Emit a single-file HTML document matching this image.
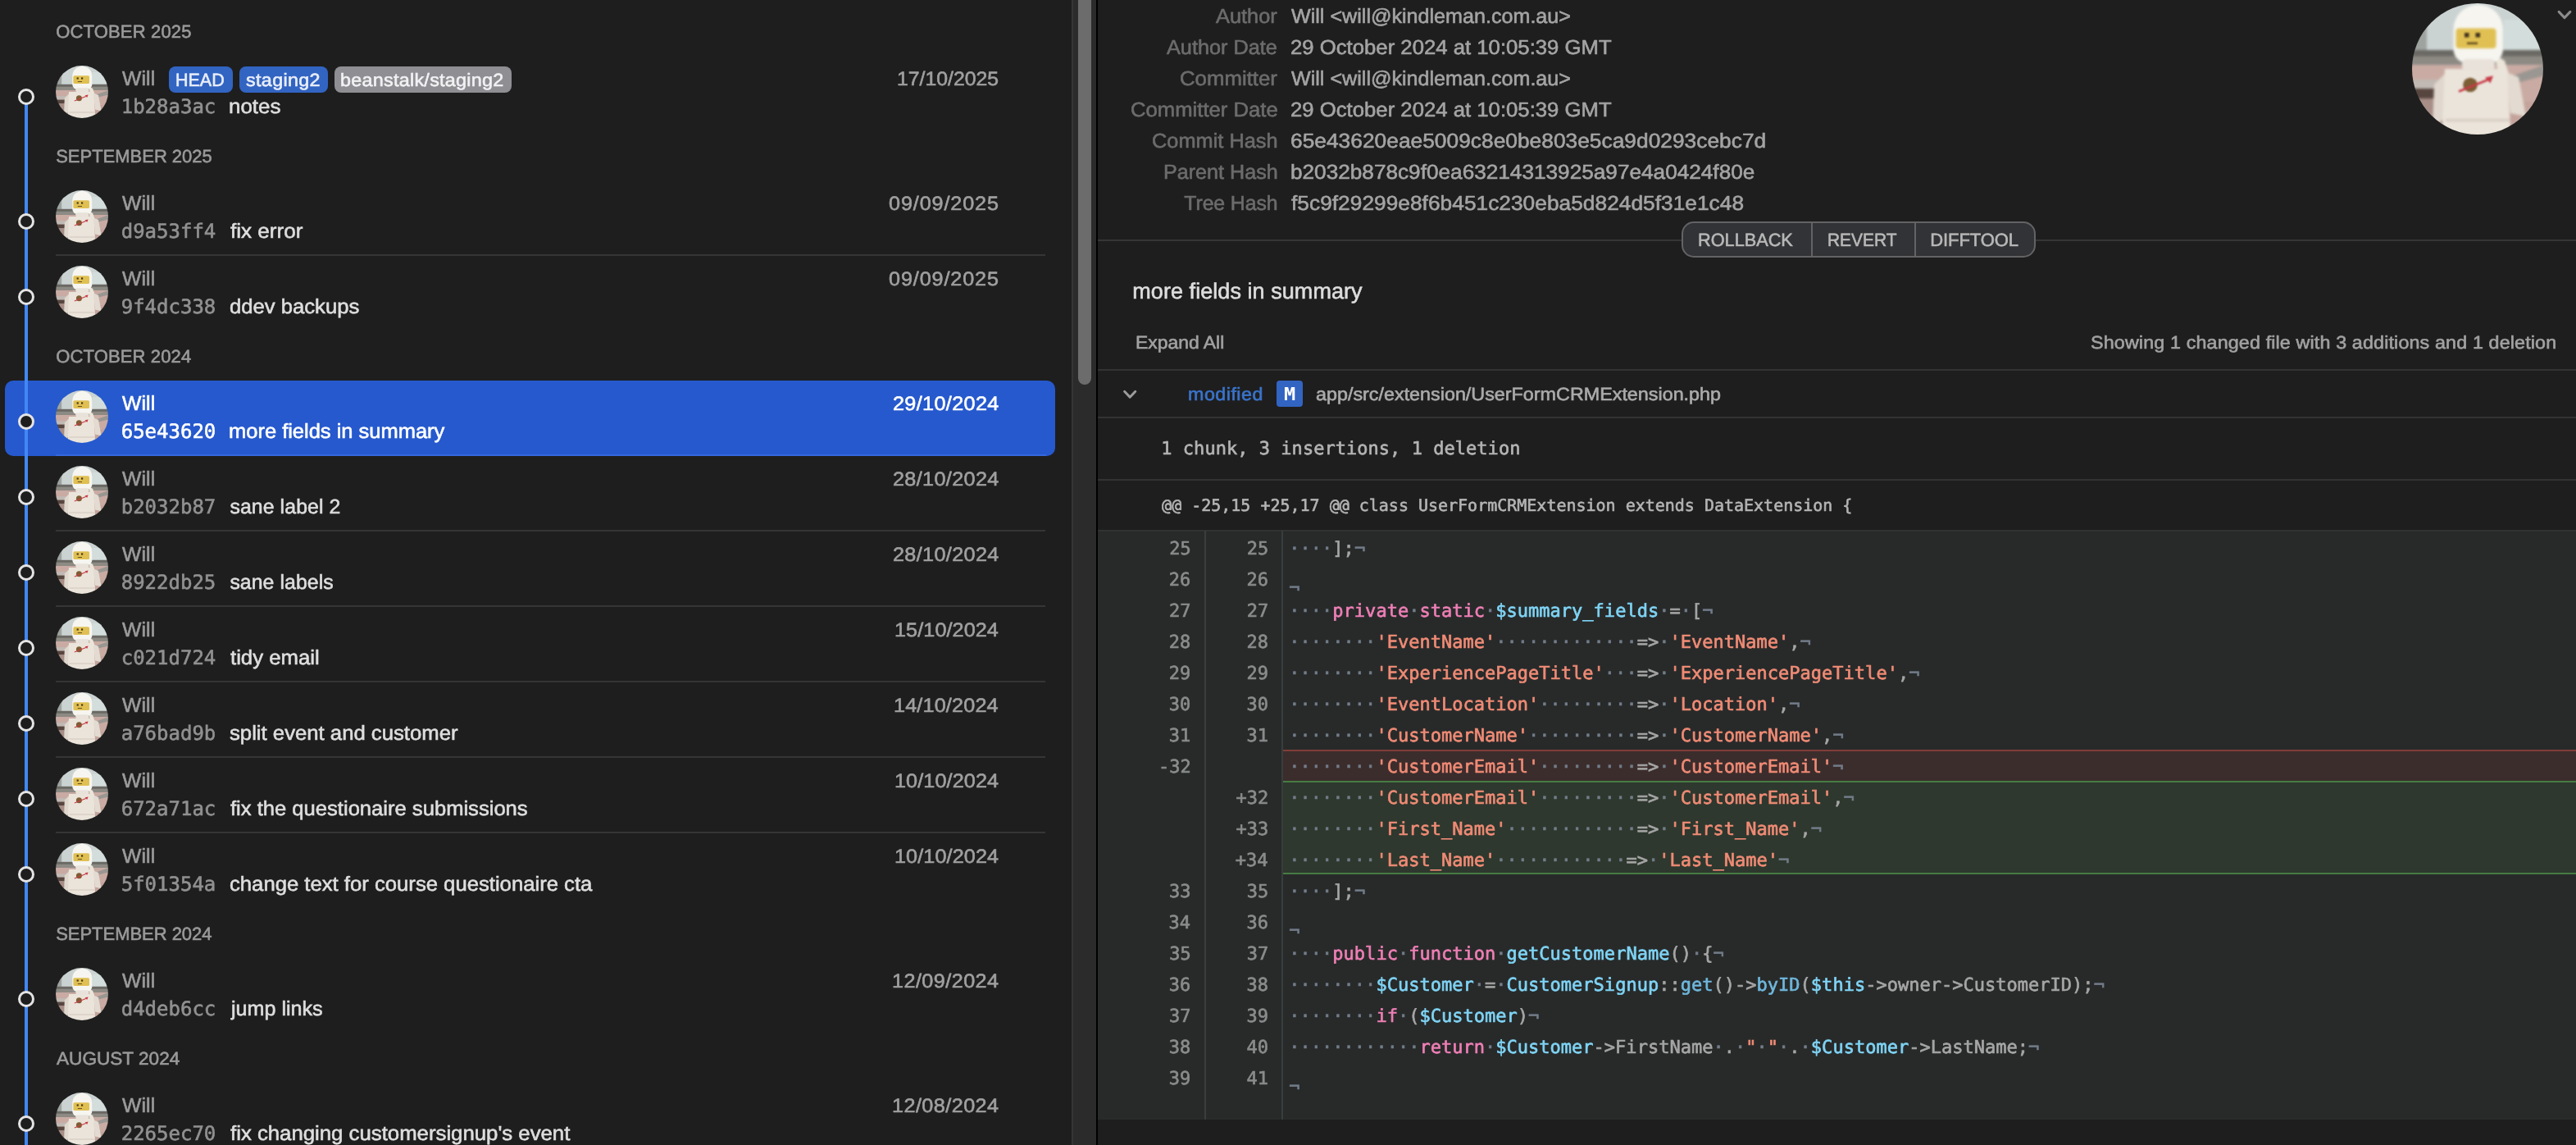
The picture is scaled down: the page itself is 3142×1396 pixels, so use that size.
<!DOCTYPE html>
<html lang="en">
<head>
<meta charset="utf-8">
<title>Commit history</title>
<style>
*{box-sizing:border-box;margin:0;padding:0}
html,body{width:3142px;height:1396px;overflow:hidden;background:#1e1e1e}
body{position:relative;font-family:"Liberation Sans",sans-serif}
section{position:absolute;left:0;top:0;width:3142px;height:1396px;transform:translateZ(0)}
.b,.t,svg.a{position:absolute}
.t,.ln{white-space:pre;line-height:1;display:block;transform-origin:0 0;text-rendering:geometricPrecision}
.m{font-family:"DejaVu Sans Mono","Liberation Mono",monospace}
.ln{position:absolute;font-family:"DejaVu Sans Mono","Liberation Mono",monospace;font-size:22px;letter-spacing:0.015px;-webkit-text-stroke:0.64px;color:#a6a6a6}
.k{color:#ee7fb5}.v{color:#7fd4f5}.s{color:#f08b75}.f{color:#6fb7dc}.d{color:#727c89}
.e{position:relative;top:10px}
</style>
</head>
<body>
<section class="commit-list">
<div class="b sel" style="left:6px;top:464px;width:1281px;height:92px;background:#2659cd;border-radius:10px"></div>
<div class="b rail" style="left:30px;top:118px;width:4px;height:1278px;background:#4287f5;"></div>
<span class="t" style="left:68.20px;top:28px;font-size:22px;color:#9a9a9a;letter-spacing:0.165px;-webkit-text-stroke:0.6px;">OCTOBER 2025</span>
<span class="t" style="left:68.20px;top:180px;font-size:22px;color:#9a9a9a;letter-spacing:-0.015px;-webkit-text-stroke:0.6px;">SEPTEMBER 2025</span>
<span class="t" style="left:68.20px;top:424px;font-size:22px;color:#9a9a9a;letter-spacing:0.143px;-webkit-text-stroke:0.6px;">OCTOBER 2024</span>
<span class="t" style="left:68.20px;top:1128px;font-size:22px;color:#9a9a9a;letter-spacing:-0.034px;-webkit-text-stroke:0.6px;">SEPTEMBER 2024</span>
<span class="t" style="left:69.21px;top:1280px;font-size:22px;color:#9a9a9a;transform:scaleX(1.0271);-webkit-text-stroke:0.6px;">AUGUST 2024</span>
<svg class="a" style="left:68px;top:80px;border-radius:50%" width="64" height="64" viewBox="0 0 160 160" role="img" aria-label="Will avatar"><g style="filter:blur(1.8px)"><rect x="-10" y="-10" width="180" height="72" fill="#cbd3d2"/><rect x="-10" y="-10" width="28" height="72" fill="#9ea3a0"/><rect x="112" y="20" width="60" height="36" fill="#d3dddb"/><rect x="-10" y="57" width="180" height="8" fill="#6b6964"/><rect x="-10" y="64.5" width="180" height="11" fill="#8d8a84"/><rect x="-10" y="75" width="180" height="95" fill="#c9aba3"/><rect x="-10" y="93" width="50" height="11" fill="#c0b9b4"/><rect x="-10" y="104" width="48" height="12" fill="#56463f"/><rect x="-10" y="116" width="48" height="54" fill="#a78e87"/><polygon points="170,72 170,86 128,97 124,88" fill="#9a9691"/><rect x="120" y="120" width="50" height="50" fill="#c3a39b"/><polygon points="27,99 42,84 45,136 25,152" fill="#e0d8ce"/><polygon points="115,84 130,90 139,138 120,134" fill="#e3dbd1"/><polygon points="100,62 113,70 118,86 105,84" fill="#ebe5d9"/><polygon points="40,80 116,80 121,170 36,170" fill="#ebe4db"/><rect x="41" y="141" width="78" height="3" fill="#d6ccc1"/><path d="M50.5 32 A30 30 0 0 1 111 32 V56 A17 17 0 0 1 94 73 H67.5 A17 17 0 0 1 50.5 56 Z" fill="#f6f5f0"/><rect x="61" y="68" width="40" height="14" rx="5" fill="#e8e2da"/><rect x="53.5" y="30.5" width="49" height="24.5" rx="4" fill="#e0c052"/></g><g style="filter:blur(1px)"><rect x="64" y="36" width="5.5" height="5.5" fill="#46371f"/><rect x="77.5" y="36" width="5.5" height="5.5" fill="#46371f"/><rect x="67" y="47.5" width="13" height="2.6" fill="#6b5322"/><circle cx="71" cy="99.5" r="8.8" fill="#7c5d34"/><path d="M57 107.5 L92 93.5" stroke="#c73a45" stroke-width="2.6" fill="none"/><polygon points="89,90.5 99,88.5 95.5,97.5" fill="#c73a45"/></g></svg>
<div class="b node" style="left:22px;top:108px;width:20px;height:20px;border-radius:50%;border:3px solid #e4e4e4;background:#1e1e1e"></div>
<span class="t" style="left:149.00px;top:85px;font-size:24.8px;color:#9b9b9b;letter-spacing:0.089px;-webkit-text-stroke:0.6px;">Will</span>
<span class="t m" style="left:147.7px;top:118px;font-size:24px;color:#919191;-webkit-text-stroke:0.6px">1b28a3ac</span>
<span class="t" style="left:279.32px;top:119px;font-size:24.8px;color:#dedede;transform:scaleX(1.0453);-webkit-text-stroke:0.6px;">notes</span>
<span class="t" style="left:1094.29px;top:85px;font-size:23.8px;color:#a0a0a0;transform:scaleX(1.0423);-webkit-text-stroke:0.6px;">17/10/2025</span>
<svg class="a" style="left:68px;top:232px;border-radius:50%" width="64" height="64" viewBox="0 0 160 160" role="img" aria-label="Will avatar"><g style="filter:blur(1.8px)"><rect x="-10" y="-10" width="180" height="72" fill="#cbd3d2"/><rect x="-10" y="-10" width="28" height="72" fill="#9ea3a0"/><rect x="112" y="20" width="60" height="36" fill="#d3dddb"/><rect x="-10" y="57" width="180" height="8" fill="#6b6964"/><rect x="-10" y="64.5" width="180" height="11" fill="#8d8a84"/><rect x="-10" y="75" width="180" height="95" fill="#c9aba3"/><rect x="-10" y="93" width="50" height="11" fill="#c0b9b4"/><rect x="-10" y="104" width="48" height="12" fill="#56463f"/><rect x="-10" y="116" width="48" height="54" fill="#a78e87"/><polygon points="170,72 170,86 128,97 124,88" fill="#9a9691"/><rect x="120" y="120" width="50" height="50" fill="#c3a39b"/><polygon points="27,99 42,84 45,136 25,152" fill="#e0d8ce"/><polygon points="115,84 130,90 139,138 120,134" fill="#e3dbd1"/><polygon points="100,62 113,70 118,86 105,84" fill="#ebe5d9"/><polygon points="40,80 116,80 121,170 36,170" fill="#ebe4db"/><rect x="41" y="141" width="78" height="3" fill="#d6ccc1"/><path d="M50.5 32 A30 30 0 0 1 111 32 V56 A17 17 0 0 1 94 73 H67.5 A17 17 0 0 1 50.5 56 Z" fill="#f6f5f0"/><rect x="61" y="68" width="40" height="14" rx="5" fill="#e8e2da"/><rect x="53.5" y="30.5" width="49" height="24.5" rx="4" fill="#e0c052"/></g><g style="filter:blur(1px)"><rect x="64" y="36" width="5.5" height="5.5" fill="#46371f"/><rect x="77.5" y="36" width="5.5" height="5.5" fill="#46371f"/><rect x="67" y="47.5" width="13" height="2.6" fill="#6b5322"/><circle cx="71" cy="99.5" r="8.8" fill="#7c5d34"/><path d="M57 107.5 L92 93.5" stroke="#c73a45" stroke-width="2.6" fill="none"/><polygon points="89,90.5 99,88.5 95.5,97.5" fill="#c73a45"/></g></svg>
<div class="b node" style="left:22px;top:260px;width:20px;height:20px;border-radius:50%;border:3px solid #e4e4e4;background:#1e1e1e"></div>
<span class="t" style="left:149.00px;top:237px;font-size:24.8px;color:#9b9b9b;letter-spacing:0.089px;-webkit-text-stroke:0.6px;">Will</span>
<span class="t m" style="left:147.7px;top:270px;font-size:24px;color:#919191;-webkit-text-stroke:0.6px">d9a53ff4</span>
<span class="t" style="left:280.75px;top:271px;font-size:24.8px;color:#dedede;transform:scaleX(1.0517);-webkit-text-stroke:0.6px;">fix error</span>
<span class="t" style="left:1084.49px;top:237px;font-size:23.8px;color:#a0a0a0;letter-spacing:0.808px;transform:scaleX(1.0600);-webkit-text-stroke:0.6px;">09/09/2025</span>
<div class="b sep" style="left:68px;top:310px;width:1207px;height:2px;background:#353535;"></div>
<svg class="a" style="left:68px;top:324px;border-radius:50%" width="64" height="64" viewBox="0 0 160 160" role="img" aria-label="Will avatar"><g style="filter:blur(1.8px)"><rect x="-10" y="-10" width="180" height="72" fill="#cbd3d2"/><rect x="-10" y="-10" width="28" height="72" fill="#9ea3a0"/><rect x="112" y="20" width="60" height="36" fill="#d3dddb"/><rect x="-10" y="57" width="180" height="8" fill="#6b6964"/><rect x="-10" y="64.5" width="180" height="11" fill="#8d8a84"/><rect x="-10" y="75" width="180" height="95" fill="#c9aba3"/><rect x="-10" y="93" width="50" height="11" fill="#c0b9b4"/><rect x="-10" y="104" width="48" height="12" fill="#56463f"/><rect x="-10" y="116" width="48" height="54" fill="#a78e87"/><polygon points="170,72 170,86 128,97 124,88" fill="#9a9691"/><rect x="120" y="120" width="50" height="50" fill="#c3a39b"/><polygon points="27,99 42,84 45,136 25,152" fill="#e0d8ce"/><polygon points="115,84 130,90 139,138 120,134" fill="#e3dbd1"/><polygon points="100,62 113,70 118,86 105,84" fill="#ebe5d9"/><polygon points="40,80 116,80 121,170 36,170" fill="#ebe4db"/><rect x="41" y="141" width="78" height="3" fill="#d6ccc1"/><path d="M50.5 32 A30 30 0 0 1 111 32 V56 A17 17 0 0 1 94 73 H67.5 A17 17 0 0 1 50.5 56 Z" fill="#f6f5f0"/><rect x="61" y="68" width="40" height="14" rx="5" fill="#e8e2da"/><rect x="53.5" y="30.5" width="49" height="24.5" rx="4" fill="#e0c052"/></g><g style="filter:blur(1px)"><rect x="64" y="36" width="5.5" height="5.5" fill="#46371f"/><rect x="77.5" y="36" width="5.5" height="5.5" fill="#46371f"/><rect x="67" y="47.5" width="13" height="2.6" fill="#6b5322"/><circle cx="71" cy="99.5" r="8.8" fill="#7c5d34"/><path d="M57 107.5 L92 93.5" stroke="#c73a45" stroke-width="2.6" fill="none"/><polygon points="89,90.5 99,88.5 95.5,97.5" fill="#c73a45"/></g></svg>
<div class="b node" style="left:22px;top:352px;width:20px;height:20px;border-radius:50%;border:3px solid #e4e4e4;background:#1e1e1e"></div>
<span class="t" style="left:149.00px;top:329px;font-size:24.8px;color:#9b9b9b;letter-spacing:0.089px;-webkit-text-stroke:0.6px;">Will</span>
<span class="t m" style="left:147.7px;top:362px;font-size:24px;color:#919191;-webkit-text-stroke:0.6px">9f4dc338</span>
<span class="t" style="left:279.98px;top:363px;font-size:24.8px;color:#dedede;transform:scaleX(1.0346);-webkit-text-stroke:0.6px;">ddev backups</span>
<span class="t" style="left:1084.49px;top:329px;font-size:23.8px;color:#a0a0a0;letter-spacing:0.808px;transform:scaleX(1.0600);-webkit-text-stroke:0.6px;">09/09/2025</span>
<svg class="a" style="left:68px;top:476px;border-radius:50%" width="64" height="64" viewBox="0 0 160 160" role="img" aria-label="Will avatar"><g style="filter:blur(1.8px)"><rect x="-10" y="-10" width="180" height="72" fill="#cbd3d2"/><rect x="-10" y="-10" width="28" height="72" fill="#9ea3a0"/><rect x="112" y="20" width="60" height="36" fill="#d3dddb"/><rect x="-10" y="57" width="180" height="8" fill="#6b6964"/><rect x="-10" y="64.5" width="180" height="11" fill="#8d8a84"/><rect x="-10" y="75" width="180" height="95" fill="#c9aba3"/><rect x="-10" y="93" width="50" height="11" fill="#c0b9b4"/><rect x="-10" y="104" width="48" height="12" fill="#56463f"/><rect x="-10" y="116" width="48" height="54" fill="#a78e87"/><polygon points="170,72 170,86 128,97 124,88" fill="#9a9691"/><rect x="120" y="120" width="50" height="50" fill="#c3a39b"/><polygon points="27,99 42,84 45,136 25,152" fill="#e0d8ce"/><polygon points="115,84 130,90 139,138 120,134" fill="#e3dbd1"/><polygon points="100,62 113,70 118,86 105,84" fill="#ebe5d9"/><polygon points="40,80 116,80 121,170 36,170" fill="#ebe4db"/><rect x="41" y="141" width="78" height="3" fill="#d6ccc1"/><path d="M50.5 32 A30 30 0 0 1 111 32 V56 A17 17 0 0 1 94 73 H67.5 A17 17 0 0 1 50.5 56 Z" fill="#f6f5f0"/><rect x="61" y="68" width="40" height="14" rx="5" fill="#e8e2da"/><rect x="53.5" y="30.5" width="49" height="24.5" rx="4" fill="#e0c052"/></g><g style="filter:blur(1px)"><rect x="64" y="36" width="5.5" height="5.5" fill="#46371f"/><rect x="77.5" y="36" width="5.5" height="5.5" fill="#46371f"/><rect x="67" y="47.5" width="13" height="2.6" fill="#6b5322"/><circle cx="71" cy="99.5" r="8.8" fill="#7c5d34"/><path d="M57 107.5 L92 93.5" stroke="#c73a45" stroke-width="2.6" fill="none"/><polygon points="89,90.5 99,88.5 95.5,97.5" fill="#c73a45"/></g></svg>
<div class="b node" style="left:22px;top:504px;width:20px;height:20px;border-radius:50%;border:3px solid #e4e4e4;background:#1e1e1e"></div>
<span class="t" style="left:149.00px;top:481px;font-size:24.8px;color:#ffffff;letter-spacing:0.089px;-webkit-text-stroke:0.6px;">Will</span>
<span class="t m" style="left:147.7px;top:514px;font-size:24px;color:#ffffff;-webkit-text-stroke:0.6px">65e43620</span>
<span class="t" style="left:279.34px;top:515px;font-size:24.8px;color:#ffffff;transform:scaleX(1.0275);-webkit-text-stroke:0.6px;">more fields in summary</span>
<span class="t" style="left:1088.73px;top:481px;font-size:23.8px;color:#ffffff;letter-spacing:0.323px;transform:scaleX(1.0600);-webkit-text-stroke:0.6px;">29/10/2024</span>
<div class="b sep" style="left:68px;top:554px;width:1208px;height:2px;background:#3468dc;"></div>
<svg class="a" style="left:68px;top:568px;border-radius:50%" width="64" height="64" viewBox="0 0 160 160" role="img" aria-label="Will avatar"><g style="filter:blur(1.8px)"><rect x="-10" y="-10" width="180" height="72" fill="#cbd3d2"/><rect x="-10" y="-10" width="28" height="72" fill="#9ea3a0"/><rect x="112" y="20" width="60" height="36" fill="#d3dddb"/><rect x="-10" y="57" width="180" height="8" fill="#6b6964"/><rect x="-10" y="64.5" width="180" height="11" fill="#8d8a84"/><rect x="-10" y="75" width="180" height="95" fill="#c9aba3"/><rect x="-10" y="93" width="50" height="11" fill="#c0b9b4"/><rect x="-10" y="104" width="48" height="12" fill="#56463f"/><rect x="-10" y="116" width="48" height="54" fill="#a78e87"/><polygon points="170,72 170,86 128,97 124,88" fill="#9a9691"/><rect x="120" y="120" width="50" height="50" fill="#c3a39b"/><polygon points="27,99 42,84 45,136 25,152" fill="#e0d8ce"/><polygon points="115,84 130,90 139,138 120,134" fill="#e3dbd1"/><polygon points="100,62 113,70 118,86 105,84" fill="#ebe5d9"/><polygon points="40,80 116,80 121,170 36,170" fill="#ebe4db"/><rect x="41" y="141" width="78" height="3" fill="#d6ccc1"/><path d="M50.5 32 A30 30 0 0 1 111 32 V56 A17 17 0 0 1 94 73 H67.5 A17 17 0 0 1 50.5 56 Z" fill="#f6f5f0"/><rect x="61" y="68" width="40" height="14" rx="5" fill="#e8e2da"/><rect x="53.5" y="30.5" width="49" height="24.5" rx="4" fill="#e0c052"/></g><g style="filter:blur(1px)"><rect x="64" y="36" width="5.5" height="5.5" fill="#46371f"/><rect x="77.5" y="36" width="5.5" height="5.5" fill="#46371f"/><rect x="67" y="47.5" width="13" height="2.6" fill="#6b5322"/><circle cx="71" cy="99.5" r="8.8" fill="#7c5d34"/><path d="M57 107.5 L92 93.5" stroke="#c73a45" stroke-width="2.6" fill="none"/><polygon points="89,90.5 99,88.5 95.5,97.5" fill="#c73a45"/></g></svg>
<div class="b node" style="left:22px;top:596px;width:20px;height:20px;border-radius:50%;border:3px solid #e4e4e4;background:#1e1e1e"></div>
<span class="t" style="left:149.00px;top:573px;font-size:24.8px;color:#9b9b9b;letter-spacing:0.089px;-webkit-text-stroke:0.6px;">Will</span>
<span class="t m" style="left:147.7px;top:606px;font-size:24px;color:#919191;-webkit-text-stroke:0.6px">b2032b87</span>
<span class="t" style="left:280.38px;top:607px;font-size:24.8px;color:#dedede;letter-spacing:0.117px;-webkit-text-stroke:0.6px;">sane label 2</span>
<span class="t" style="left:1088.73px;top:573px;font-size:23.8px;color:#a0a0a0;letter-spacing:0.323px;transform:scaleX(1.0600);-webkit-text-stroke:0.6px;">28/10/2024</span>
<div class="b sep" style="left:68px;top:646px;width:1207px;height:2px;background:#353535;"></div>
<svg class="a" style="left:68px;top:660px;border-radius:50%" width="64" height="64" viewBox="0 0 160 160" role="img" aria-label="Will avatar"><g style="filter:blur(1.8px)"><rect x="-10" y="-10" width="180" height="72" fill="#cbd3d2"/><rect x="-10" y="-10" width="28" height="72" fill="#9ea3a0"/><rect x="112" y="20" width="60" height="36" fill="#d3dddb"/><rect x="-10" y="57" width="180" height="8" fill="#6b6964"/><rect x="-10" y="64.5" width="180" height="11" fill="#8d8a84"/><rect x="-10" y="75" width="180" height="95" fill="#c9aba3"/><rect x="-10" y="93" width="50" height="11" fill="#c0b9b4"/><rect x="-10" y="104" width="48" height="12" fill="#56463f"/><rect x="-10" y="116" width="48" height="54" fill="#a78e87"/><polygon points="170,72 170,86 128,97 124,88" fill="#9a9691"/><rect x="120" y="120" width="50" height="50" fill="#c3a39b"/><polygon points="27,99 42,84 45,136 25,152" fill="#e0d8ce"/><polygon points="115,84 130,90 139,138 120,134" fill="#e3dbd1"/><polygon points="100,62 113,70 118,86 105,84" fill="#ebe5d9"/><polygon points="40,80 116,80 121,170 36,170" fill="#ebe4db"/><rect x="41" y="141" width="78" height="3" fill="#d6ccc1"/><path d="M50.5 32 A30 30 0 0 1 111 32 V56 A17 17 0 0 1 94 73 H67.5 A17 17 0 0 1 50.5 56 Z" fill="#f6f5f0"/><rect x="61" y="68" width="40" height="14" rx="5" fill="#e8e2da"/><rect x="53.5" y="30.5" width="49" height="24.5" rx="4" fill="#e0c052"/></g><g style="filter:blur(1px)"><rect x="64" y="36" width="5.5" height="5.5" fill="#46371f"/><rect x="77.5" y="36" width="5.5" height="5.5" fill="#46371f"/><rect x="67" y="47.5" width="13" height="2.6" fill="#6b5322"/><circle cx="71" cy="99.5" r="8.8" fill="#7c5d34"/><path d="M57 107.5 L92 93.5" stroke="#c73a45" stroke-width="2.6" fill="none"/><polygon points="89,90.5 99,88.5 95.5,97.5" fill="#c73a45"/></g></svg>
<div class="b node" style="left:22px;top:688px;width:20px;height:20px;border-radius:50%;border:3px solid #e4e4e4;background:#1e1e1e"></div>
<span class="t" style="left:149.00px;top:665px;font-size:24.8px;color:#9b9b9b;letter-spacing:0.089px;-webkit-text-stroke:0.6px;">Will</span>
<span class="t m" style="left:147.7px;top:698px;font-size:24px;color:#919191;-webkit-text-stroke:0.6px">8922db25</span>
<span class="t" style="left:280.38px;top:699px;font-size:24.8px;color:#dedede;letter-spacing:0.089px;-webkit-text-stroke:0.6px;">sane labels</span>
<span class="t" style="left:1088.73px;top:665px;font-size:23.8px;color:#a0a0a0;letter-spacing:0.323px;transform:scaleX(1.0600);-webkit-text-stroke:0.6px;">28/10/2024</span>
<div class="b sep" style="left:68px;top:738px;width:1207px;height:2px;background:#353535;"></div>
<svg class="a" style="left:68px;top:752px;border-radius:50%" width="64" height="64" viewBox="0 0 160 160" role="img" aria-label="Will avatar"><g style="filter:blur(1.8px)"><rect x="-10" y="-10" width="180" height="72" fill="#cbd3d2"/><rect x="-10" y="-10" width="28" height="72" fill="#9ea3a0"/><rect x="112" y="20" width="60" height="36" fill="#d3dddb"/><rect x="-10" y="57" width="180" height="8" fill="#6b6964"/><rect x="-10" y="64.5" width="180" height="11" fill="#8d8a84"/><rect x="-10" y="75" width="180" height="95" fill="#c9aba3"/><rect x="-10" y="93" width="50" height="11" fill="#c0b9b4"/><rect x="-10" y="104" width="48" height="12" fill="#56463f"/><rect x="-10" y="116" width="48" height="54" fill="#a78e87"/><polygon points="170,72 170,86 128,97 124,88" fill="#9a9691"/><rect x="120" y="120" width="50" height="50" fill="#c3a39b"/><polygon points="27,99 42,84 45,136 25,152" fill="#e0d8ce"/><polygon points="115,84 130,90 139,138 120,134" fill="#e3dbd1"/><polygon points="100,62 113,70 118,86 105,84" fill="#ebe5d9"/><polygon points="40,80 116,80 121,170 36,170" fill="#ebe4db"/><rect x="41" y="141" width="78" height="3" fill="#d6ccc1"/><path d="M50.5 32 A30 30 0 0 1 111 32 V56 A17 17 0 0 1 94 73 H67.5 A17 17 0 0 1 50.5 56 Z" fill="#f6f5f0"/><rect x="61" y="68" width="40" height="14" rx="5" fill="#e8e2da"/><rect x="53.5" y="30.5" width="49" height="24.5" rx="4" fill="#e0c052"/></g><g style="filter:blur(1px)"><rect x="64" y="36" width="5.5" height="5.5" fill="#46371f"/><rect x="77.5" y="36" width="5.5" height="5.5" fill="#46371f"/><rect x="67" y="47.5" width="13" height="2.6" fill="#6b5322"/><circle cx="71" cy="99.5" r="8.8" fill="#7c5d34"/><path d="M57 107.5 L92 93.5" stroke="#c73a45" stroke-width="2.6" fill="none"/><polygon points="89,90.5 99,88.5 95.5,97.5" fill="#c73a45"/></g></svg>
<div class="b node" style="left:22px;top:780px;width:20px;height:20px;border-radius:50%;border:3px solid #e4e4e4;background:#1e1e1e"></div>
<span class="t" style="left:149.00px;top:757px;font-size:24.8px;color:#9b9b9b;letter-spacing:0.089px;-webkit-text-stroke:0.6px;">Will</span>
<span class="t m" style="left:147.7px;top:790px;font-size:24px;color:#919191;-webkit-text-stroke:0.6px">c021d724</span>
<span class="t" style="left:280.62px;top:791px;font-size:24.8px;color:#dedede;transform:scaleX(1.0384);-webkit-text-stroke:0.6px;">tidy email</span>
<span class="t" style="left:1091.16px;top:757px;font-size:23.8px;color:#a0a0a0;letter-spacing:0.067px;transform:scaleX(1.0600);-webkit-text-stroke:0.6px;">15/10/2024</span>
<div class="b sep" style="left:68px;top:830px;width:1207px;height:2px;background:#353535;"></div>
<svg class="a" style="left:68px;top:844px;border-radius:50%" width="64" height="64" viewBox="0 0 160 160" role="img" aria-label="Will avatar"><g style="filter:blur(1.8px)"><rect x="-10" y="-10" width="180" height="72" fill="#cbd3d2"/><rect x="-10" y="-10" width="28" height="72" fill="#9ea3a0"/><rect x="112" y="20" width="60" height="36" fill="#d3dddb"/><rect x="-10" y="57" width="180" height="8" fill="#6b6964"/><rect x="-10" y="64.5" width="180" height="11" fill="#8d8a84"/><rect x="-10" y="75" width="180" height="95" fill="#c9aba3"/><rect x="-10" y="93" width="50" height="11" fill="#c0b9b4"/><rect x="-10" y="104" width="48" height="12" fill="#56463f"/><rect x="-10" y="116" width="48" height="54" fill="#a78e87"/><polygon points="170,72 170,86 128,97 124,88" fill="#9a9691"/><rect x="120" y="120" width="50" height="50" fill="#c3a39b"/><polygon points="27,99 42,84 45,136 25,152" fill="#e0d8ce"/><polygon points="115,84 130,90 139,138 120,134" fill="#e3dbd1"/><polygon points="100,62 113,70 118,86 105,84" fill="#ebe5d9"/><polygon points="40,80 116,80 121,170 36,170" fill="#ebe4db"/><rect x="41" y="141" width="78" height="3" fill="#d6ccc1"/><path d="M50.5 32 A30 30 0 0 1 111 32 V56 A17 17 0 0 1 94 73 H67.5 A17 17 0 0 1 50.5 56 Z" fill="#f6f5f0"/><rect x="61" y="68" width="40" height="14" rx="5" fill="#e8e2da"/><rect x="53.5" y="30.5" width="49" height="24.5" rx="4" fill="#e0c052"/></g><g style="filter:blur(1px)"><rect x="64" y="36" width="5.5" height="5.5" fill="#46371f"/><rect x="77.5" y="36" width="5.5" height="5.5" fill="#46371f"/><rect x="67" y="47.5" width="13" height="2.6" fill="#6b5322"/><circle cx="71" cy="99.5" r="8.8" fill="#7c5d34"/><path d="M57 107.5 L92 93.5" stroke="#c73a45" stroke-width="2.6" fill="none"/><polygon points="89,90.5 99,88.5 95.5,97.5" fill="#c73a45"/></g></svg>
<div class="b node" style="left:22px;top:872px;width:20px;height:20px;border-radius:50%;border:3px solid #e4e4e4;background:#1e1e1e"></div>
<span class="t" style="left:149.00px;top:849px;font-size:24.8px;color:#9b9b9b;letter-spacing:0.089px;-webkit-text-stroke:0.6px;">Will</span>
<span class="t m" style="left:147.7px;top:882px;font-size:24px;color:#919191;-webkit-text-stroke:0.6px">a76bad9b</span>
<span class="t" style="left:280.36px;top:883px;font-size:24.8px;color:#dedede;transform:scaleX(1.0363);-webkit-text-stroke:0.6px;">split event and customer</span>
<span class="t" style="left:1090.46px;top:849px;font-size:23.8px;color:#a0a0a0;letter-spacing:0.140px;transform:scaleX(1.0600);-webkit-text-stroke:0.6px;">14/10/2024</span>
<div class="b sep" style="left:68px;top:922px;width:1207px;height:2px;background:#353535;"></div>
<svg class="a" style="left:68px;top:936px;border-radius:50%" width="64" height="64" viewBox="0 0 160 160" role="img" aria-label="Will avatar"><g style="filter:blur(1.8px)"><rect x="-10" y="-10" width="180" height="72" fill="#cbd3d2"/><rect x="-10" y="-10" width="28" height="72" fill="#9ea3a0"/><rect x="112" y="20" width="60" height="36" fill="#d3dddb"/><rect x="-10" y="57" width="180" height="8" fill="#6b6964"/><rect x="-10" y="64.5" width="180" height="11" fill="#8d8a84"/><rect x="-10" y="75" width="180" height="95" fill="#c9aba3"/><rect x="-10" y="93" width="50" height="11" fill="#c0b9b4"/><rect x="-10" y="104" width="48" height="12" fill="#56463f"/><rect x="-10" y="116" width="48" height="54" fill="#a78e87"/><polygon points="170,72 170,86 128,97 124,88" fill="#9a9691"/><rect x="120" y="120" width="50" height="50" fill="#c3a39b"/><polygon points="27,99 42,84 45,136 25,152" fill="#e0d8ce"/><polygon points="115,84 130,90 139,138 120,134" fill="#e3dbd1"/><polygon points="100,62 113,70 118,86 105,84" fill="#ebe5d9"/><polygon points="40,80 116,80 121,170 36,170" fill="#ebe4db"/><rect x="41" y="141" width="78" height="3" fill="#d6ccc1"/><path d="M50.5 32 A30 30 0 0 1 111 32 V56 A17 17 0 0 1 94 73 H67.5 A17 17 0 0 1 50.5 56 Z" fill="#f6f5f0"/><rect x="61" y="68" width="40" height="14" rx="5" fill="#e8e2da"/><rect x="53.5" y="30.5" width="49" height="24.5" rx="4" fill="#e0c052"/></g><g style="filter:blur(1px)"><rect x="64" y="36" width="5.5" height="5.5" fill="#46371f"/><rect x="77.5" y="36" width="5.5" height="5.5" fill="#46371f"/><rect x="67" y="47.5" width="13" height="2.6" fill="#6b5322"/><circle cx="71" cy="99.5" r="8.8" fill="#7c5d34"/><path d="M57 107.5 L92 93.5" stroke="#c73a45" stroke-width="2.6" fill="none"/><polygon points="89,90.5 99,88.5 95.5,97.5" fill="#c73a45"/></g></svg>
<div class="b node" style="left:22px;top:964px;width:20px;height:20px;border-radius:50%;border:3px solid #e4e4e4;background:#1e1e1e"></div>
<span class="t" style="left:149.00px;top:941px;font-size:24.8px;color:#9b9b9b;letter-spacing:0.089px;-webkit-text-stroke:0.6px;">Will</span>
<span class="t m" style="left:147.7px;top:974px;font-size:24px;color:#919191;-webkit-text-stroke:0.6px">672a71ac</span>
<span class="t" style="left:280.75px;top:975px;font-size:24.8px;color:#dedede;transform:scaleX(1.0318);-webkit-text-stroke:0.6px;">fix the questionaire submissions</span>
<span class="t" style="left:1090.96px;top:941px;font-size:23.8px;color:#a0a0a0;letter-spacing:0.088px;transform:scaleX(1.0600);-webkit-text-stroke:0.6px;">10/10/2024</span>
<div class="b sep" style="left:68px;top:1014px;width:1207px;height:2px;background:#353535;"></div>
<svg class="a" style="left:68px;top:1028px;border-radius:50%" width="64" height="64" viewBox="0 0 160 160" role="img" aria-label="Will avatar"><g style="filter:blur(1.8px)"><rect x="-10" y="-10" width="180" height="72" fill="#cbd3d2"/><rect x="-10" y="-10" width="28" height="72" fill="#9ea3a0"/><rect x="112" y="20" width="60" height="36" fill="#d3dddb"/><rect x="-10" y="57" width="180" height="8" fill="#6b6964"/><rect x="-10" y="64.5" width="180" height="11" fill="#8d8a84"/><rect x="-10" y="75" width="180" height="95" fill="#c9aba3"/><rect x="-10" y="93" width="50" height="11" fill="#c0b9b4"/><rect x="-10" y="104" width="48" height="12" fill="#56463f"/><rect x="-10" y="116" width="48" height="54" fill="#a78e87"/><polygon points="170,72 170,86 128,97 124,88" fill="#9a9691"/><rect x="120" y="120" width="50" height="50" fill="#c3a39b"/><polygon points="27,99 42,84 45,136 25,152" fill="#e0d8ce"/><polygon points="115,84 130,90 139,138 120,134" fill="#e3dbd1"/><polygon points="100,62 113,70 118,86 105,84" fill="#ebe5d9"/><polygon points="40,80 116,80 121,170 36,170" fill="#ebe4db"/><rect x="41" y="141" width="78" height="3" fill="#d6ccc1"/><path d="M50.5 32 A30 30 0 0 1 111 32 V56 A17 17 0 0 1 94 73 H67.5 A17 17 0 0 1 50.5 56 Z" fill="#f6f5f0"/><rect x="61" y="68" width="40" height="14" rx="5" fill="#e8e2da"/><rect x="53.5" y="30.5" width="49" height="24.5" rx="4" fill="#e0c052"/></g><g style="filter:blur(1px)"><rect x="64" y="36" width="5.5" height="5.5" fill="#46371f"/><rect x="77.5" y="36" width="5.5" height="5.5" fill="#46371f"/><rect x="67" y="47.5" width="13" height="2.6" fill="#6b5322"/><circle cx="71" cy="99.5" r="8.8" fill="#7c5d34"/><path d="M57 107.5 L92 93.5" stroke="#c73a45" stroke-width="2.6" fill="none"/><polygon points="89,90.5 99,88.5 95.5,97.5" fill="#c73a45"/></g></svg>
<div class="b node" style="left:22px;top:1056px;width:20px;height:20px;border-radius:50%;border:3px solid #e4e4e4;background:#1e1e1e"></div>
<span class="t" style="left:149.00px;top:1033px;font-size:24.8px;color:#9b9b9b;letter-spacing:0.089px;-webkit-text-stroke:0.6px;">Will</span>
<span class="t m" style="left:147.7px;top:1066px;font-size:24px;color:#919191;-webkit-text-stroke:0.6px">5f01354a</span>
<span class="t" style="left:279.98px;top:1067px;font-size:24.8px;color:#dedede;transform:scaleX(1.0352);-webkit-text-stroke:0.6px;">change text for course questionaire cta</span>
<span class="t" style="left:1090.96px;top:1033px;font-size:23.8px;color:#a0a0a0;letter-spacing:0.088px;transform:scaleX(1.0600);-webkit-text-stroke:0.6px;">10/10/2024</span>
<svg class="a" style="left:68px;top:1180px;border-radius:50%" width="64" height="64" viewBox="0 0 160 160" role="img" aria-label="Will avatar"><g style="filter:blur(1.8px)"><rect x="-10" y="-10" width="180" height="72" fill="#cbd3d2"/><rect x="-10" y="-10" width="28" height="72" fill="#9ea3a0"/><rect x="112" y="20" width="60" height="36" fill="#d3dddb"/><rect x="-10" y="57" width="180" height="8" fill="#6b6964"/><rect x="-10" y="64.5" width="180" height="11" fill="#8d8a84"/><rect x="-10" y="75" width="180" height="95" fill="#c9aba3"/><rect x="-10" y="93" width="50" height="11" fill="#c0b9b4"/><rect x="-10" y="104" width="48" height="12" fill="#56463f"/><rect x="-10" y="116" width="48" height="54" fill="#a78e87"/><polygon points="170,72 170,86 128,97 124,88" fill="#9a9691"/><rect x="120" y="120" width="50" height="50" fill="#c3a39b"/><polygon points="27,99 42,84 45,136 25,152" fill="#e0d8ce"/><polygon points="115,84 130,90 139,138 120,134" fill="#e3dbd1"/><polygon points="100,62 113,70 118,86 105,84" fill="#ebe5d9"/><polygon points="40,80 116,80 121,170 36,170" fill="#ebe4db"/><rect x="41" y="141" width="78" height="3" fill="#d6ccc1"/><path d="M50.5 32 A30 30 0 0 1 111 32 V56 A17 17 0 0 1 94 73 H67.5 A17 17 0 0 1 50.5 56 Z" fill="#f6f5f0"/><rect x="61" y="68" width="40" height="14" rx="5" fill="#e8e2da"/><rect x="53.5" y="30.5" width="49" height="24.5" rx="4" fill="#e0c052"/></g><g style="filter:blur(1px)"><rect x="64" y="36" width="5.5" height="5.5" fill="#46371f"/><rect x="77.5" y="36" width="5.5" height="5.5" fill="#46371f"/><rect x="67" y="47.5" width="13" height="2.6" fill="#6b5322"/><circle cx="71" cy="99.5" r="8.8" fill="#7c5d34"/><path d="M57 107.5 L92 93.5" stroke="#c73a45" stroke-width="2.6" fill="none"/><polygon points="89,90.5 99,88.5 95.5,97.5" fill="#c73a45"/></g></svg>
<div class="b node" style="left:22px;top:1208px;width:20px;height:20px;border-radius:50%;border:3px solid #e4e4e4;background:#1e1e1e"></div>
<span class="t" style="left:149.00px;top:1185px;font-size:24.8px;color:#9b9b9b;letter-spacing:0.089px;-webkit-text-stroke:0.6px;">Will</span>
<span class="t m" style="left:147.7px;top:1218px;font-size:24px;color:#919191;-webkit-text-stroke:0.6px">d4deb6cc</span>
<span class="t" style="left:281.64px;top:1219px;font-size:24.8px;color:#dedede;transform:scaleX(1.0128);-webkit-text-stroke:0.6px;">jump links</span>
<span class="t" style="left:1087.96px;top:1185px;font-size:23.8px;color:#a0a0a0;letter-spacing:0.402px;transform:scaleX(1.0600);-webkit-text-stroke:0.6px;">12/09/2024</span>
<svg class="a" style="left:68px;top:1332px;border-radius:50%" width="64" height="64" viewBox="0 0 160 160" role="img" aria-label="Will avatar"><g style="filter:blur(1.8px)"><rect x="-10" y="-10" width="180" height="72" fill="#cbd3d2"/><rect x="-10" y="-10" width="28" height="72" fill="#9ea3a0"/><rect x="112" y="20" width="60" height="36" fill="#d3dddb"/><rect x="-10" y="57" width="180" height="8" fill="#6b6964"/><rect x="-10" y="64.5" width="180" height="11" fill="#8d8a84"/><rect x="-10" y="75" width="180" height="95" fill="#c9aba3"/><rect x="-10" y="93" width="50" height="11" fill="#c0b9b4"/><rect x="-10" y="104" width="48" height="12" fill="#56463f"/><rect x="-10" y="116" width="48" height="54" fill="#a78e87"/><polygon points="170,72 170,86 128,97 124,88" fill="#9a9691"/><rect x="120" y="120" width="50" height="50" fill="#c3a39b"/><polygon points="27,99 42,84 45,136 25,152" fill="#e0d8ce"/><polygon points="115,84 130,90 139,138 120,134" fill="#e3dbd1"/><polygon points="100,62 113,70 118,86 105,84" fill="#ebe5d9"/><polygon points="40,80 116,80 121,170 36,170" fill="#ebe4db"/><rect x="41" y="141" width="78" height="3" fill="#d6ccc1"/><path d="M50.5 32 A30 30 0 0 1 111 32 V56 A17 17 0 0 1 94 73 H67.5 A17 17 0 0 1 50.5 56 Z" fill="#f6f5f0"/><rect x="61" y="68" width="40" height="14" rx="5" fill="#e8e2da"/><rect x="53.5" y="30.5" width="49" height="24.5" rx="4" fill="#e0c052"/></g><g style="filter:blur(1px)"><rect x="64" y="36" width="5.5" height="5.5" fill="#46371f"/><rect x="77.5" y="36" width="5.5" height="5.5" fill="#46371f"/><rect x="67" y="47.5" width="13" height="2.6" fill="#6b5322"/><circle cx="71" cy="99.5" r="8.8" fill="#7c5d34"/><path d="M57 107.5 L92 93.5" stroke="#c73a45" stroke-width="2.6" fill="none"/><polygon points="89,90.5 99,88.5 95.5,97.5" fill="#c73a45"/></g></svg>
<div class="b node" style="left:22px;top:1360px;width:20px;height:20px;border-radius:50%;border:3px solid #e4e4e4;background:#1e1e1e"></div>
<span class="t" style="left:149.00px;top:1337px;font-size:24.8px;color:#9b9b9b;letter-spacing:0.089px;-webkit-text-stroke:0.6px;">Will</span>
<span class="t m" style="left:147.7px;top:1370px;font-size:24px;color:#919191;-webkit-text-stroke:0.6px">2265ec70</span>
<span class="t" style="left:280.75px;top:1371px;font-size:24.8px;color:#dedede;transform:scaleX(1.0386);-webkit-text-stroke:0.6px;">fix changing customersignup's event</span>
<span class="t" style="left:1087.96px;top:1337px;font-size:23.8px;color:#a0a0a0;letter-spacing:0.402px;transform:scaleX(1.0600);-webkit-text-stroke:0.6px;">12/08/2024</span>
<div class="b badge" style="left:206px;top:81px;width:78px;height:32px;background:#3264c2;border-radius:8px"></div>
<span class="t" style="left:214.18px;top:87px;font-size:22px;color:#e9eef9;transform:scaleX(0.9769);-webkit-text-stroke:0.6px;">HEAD</span>
<div class="b badge" style="left:292px;top:81px;width:108px;height:32px;background:#3264c2;border-radius:8px"></div>
<span class="t" style="left:300.09px;top:87px;font-size:22px;color:#e9eef9;letter-spacing:0.320px;transform:scaleX(1.0600);-webkit-text-stroke:0.6px;">staging2</span>
<div class="b badge" style="left:408px;top:81px;width:216px;height:32px;background:#8e8e93;border-radius:8px"></div>
<span class="t" style="left:415.26px;top:87px;font-size:22px;color:#f2f2f4;letter-spacing:0.266px;transform:scaleX(1.0600);-webkit-text-stroke:0.6px;">beanstalk/staging2</span>
<div class="b track" style="left:1307px;top:0px;width:30px;height:1396px;background:#2b2b2b;border-left:2px solid #353535"></div>
<div class="b thumb" style="left:1315px;top:-20px;width:16px;height:489px;background:#6c6c6c;border-radius:8px"></div>
<div class="b divider" style="left:1337px;top:0px;width:2px;height:1396px;background:#000;"></div>
</section>
<section class="commit-detail">
<span class="t" style="left:1482.61px;top:9px;font-size:24.8px;color:#6c6c6c;transform:scaleX(1.0225);-webkit-text-stroke:0.6px;">Author</span>
<span class="t" style="left:1575.30px;top:9px;font-size:24.8px;color:#a4a4a4;transform:scaleX(1.0129);-webkit-text-stroke:0.6px;">Will &lt;will@kindleman.com.au&gt;</span>
<span class="t" style="left:1423.21px;top:47px;font-size:24.8px;color:#6c6c6c;transform:scaleX(1.0193);-webkit-text-stroke:0.6px;">Author Date</span>
<span class="t" style="left:1574.14px;top:47px;font-size:24.8px;color:#a4a4a4;transform:scaleX(1.0371);-webkit-text-stroke:0.6px;">29 October 2024 at 10:05:39 GMT</span>
<span class="t" style="left:1438.51px;top:85px;font-size:24.8px;color:#6c6c6c;transform:scaleX(1.0397);-webkit-text-stroke:0.6px;">Committer</span>
<span class="t" style="left:1575.30px;top:85px;font-size:24.8px;color:#a4a4a4;transform:scaleX(1.0129);-webkit-text-stroke:0.6px;">Will &lt;will@kindleman.com.au&gt;</span>
<span class="t" style="left:1378.52px;top:123px;font-size:24.8px;color:#6c6c6c;transform:scaleX(1.0348);-webkit-text-stroke:0.6px;">Committer Date</span>
<span class="t" style="left:1574.14px;top:123px;font-size:24.8px;color:#a4a4a4;transform:scaleX(1.0371);-webkit-text-stroke:0.6px;">29 October 2024 at 10:05:39 GMT</span>
<span class="t" style="left:1405.03px;top:161px;font-size:24.8px;color:#6c6c6c;transform:scaleX(1.0228);-webkit-text-stroke:0.6px;">Commit Hash</span>
<span class="t" style="left:1573.99px;top:161px;font-size:24.8px;color:#a4a4a4;letter-spacing:0.033px;transform:scaleX(1.0600);-webkit-text-stroke:0.6px;">65e43620eae5009c8e0be803e5ca9d0293cebc7d</span>
<span class="t" style="left:1418.88px;top:199px;font-size:24.8px;color:#6c6c6c;transform:scaleX(1.0137);-webkit-text-stroke:0.6px;">Parent Hash</span>
<span class="t" style="left:1573.73px;top:199px;font-size:24.8px;color:#a4a4a4;transform:scaleX(1.0557);-webkit-text-stroke:0.6px;">b2032b878c9f0ea63214313925a97e4a0424f80e</span>
<span class="t" style="left:1444.30px;top:237px;font-size:24.8px;color:#6c6c6c;letter-spacing:-0.076px;-webkit-text-stroke:0.6px;">Tree Hash</span>
<span class="t" style="left:1575.05px;top:237px;font-size:24.8px;color:#a4a4a4;letter-spacing:0.024px;transform:scaleX(1.0600);-webkit-text-stroke:0.6px;">f5c9f29299e8f6b451c230eba5d824d5f31e1c48</span>
<svg class="a" style="left:2942px;top:4px;border-radius:50%" width="160" height="160" viewBox="0 0 160 160" role="img" aria-label="Will avatar"><g style="filter:blur(1.8px)"><rect x="-10" y="-10" width="180" height="72" fill="#cbd3d2"/><rect x="-10" y="-10" width="28" height="72" fill="#9ea3a0"/><rect x="112" y="20" width="60" height="36" fill="#d3dddb"/><rect x="-10" y="57" width="180" height="8" fill="#6b6964"/><rect x="-10" y="64.5" width="180" height="11" fill="#8d8a84"/><rect x="-10" y="75" width="180" height="95" fill="#c9aba3"/><rect x="-10" y="93" width="50" height="11" fill="#c0b9b4"/><rect x="-10" y="104" width="48" height="12" fill="#56463f"/><rect x="-10" y="116" width="48" height="54" fill="#a78e87"/><polygon points="170,72 170,86 128,97 124,88" fill="#9a9691"/><rect x="120" y="120" width="50" height="50" fill="#c3a39b"/><polygon points="27,99 42,84 45,136 25,152" fill="#e0d8ce"/><polygon points="115,84 130,90 139,138 120,134" fill="#e3dbd1"/><polygon points="100,62 113,70 118,86 105,84" fill="#ebe5d9"/><polygon points="40,80 116,80 121,170 36,170" fill="#ebe4db"/><rect x="41" y="141" width="78" height="3" fill="#d6ccc1"/><path d="M50.5 32 A30 30 0 0 1 111 32 V56 A17 17 0 0 1 94 73 H67.5 A17 17 0 0 1 50.5 56 Z" fill="#f6f5f0"/><rect x="61" y="68" width="40" height="14" rx="5" fill="#e8e2da"/><rect x="53.5" y="30.5" width="49" height="24.5" rx="4" fill="#e0c052"/></g><g style="filter:blur(1px)"><rect x="64" y="36" width="5.5" height="5.5" fill="#46371f"/><rect x="77.5" y="36" width="5.5" height="5.5" fill="#46371f"/><rect x="67" y="47.5" width="13" height="2.6" fill="#6b5322"/><circle cx="71" cy="99.5" r="8.8" fill="#7c5d34"/><path d="M57 107.5 L92 93.5" stroke="#c73a45" stroke-width="2.6" fill="none"/><polygon points="89,90.5 99,88.5 95.5,97.5" fill="#c73a45"/></g></svg>
<svg class="a" style="left:3117px;top:10px" width="22" height="16" viewBox="0 0 22 16" aria-hidden="true"><path d="M4.1 4.4 L11 11.6 L17.9 4.4" fill="none" stroke="#8c8c8c" stroke-width="3" stroke-linecap="round" stroke-linejoin="round"/></svg>
<div class="b sep" style="left:1339px;top:292px;width:1803px;height:2px;background:#363636;"></div>
<div class="b btns" style="left:2051px;top:270px;width:432px;height:44px;background:#323336;border:2px solid #636365;border-radius:15px"></div>
<div class="b" style="left:2209px;top:272px;width:2px;height:40px;background:#636365;"></div>
<div class="b" style="left:2335px;top:272px;width:2px;height:40px;background:#636365;"></div>
<span class="t" style="left:2071.37px;top:282px;font-size:22px;color:#b8b8b8;transform:scaleX(0.9866);-webkit-text-stroke:0.6px;">ROLLBACK</span>
<span class="t" style="left:2228.82px;top:282px;font-size:22px;color:#b8b8b8;transform:scaleX(0.9513);-webkit-text-stroke:0.6px;">REVERT</span>
<span class="t" style="left:2354.25px;top:282px;font-size:22px;color:#b8b8b8;letter-spacing:-0.074px;-webkit-text-stroke:0.6px;">DIFFTOOL</span>
<span class="t" style="left:1381.25px;top:342px;font-size:27px;color:#dedede;letter-spacing:0.061px;-webkit-text-stroke:0.6px;">more fields in summary</span>
<span class="t" style="left:1385.19px;top:407px;font-size:22px;color:#a2a2a2;transform:scaleX(1.0415);-webkit-text-stroke:0.6px;">Expand All</span>
<span class="t" style="left:2550.16px;top:407px;font-size:22px;color:#a2a2a2;letter-spacing:0.121px;transform:scaleX(1.0600);-webkit-text-stroke:0.6px;">Showing 1 changed file with 3 additions and 1 deletion</span>
<div class="b sep" style="left:1339px;top:450px;width:1803px;height:2px;background:#333333;"></div>
<svg class="a" style="left:1367px;top:471px" width="22" height="18" viewBox="0 0 22 18" aria-hidden="true"><path d="M4.6 6.3 L11.2 13.2 L17.8 6.3" fill="none" stroke="#9c9c9c" stroke-width="3" stroke-linecap="round" stroke-linejoin="round"/></svg>
<span class="t" style="left:1448.66px;top:470px;font-size:22px;color:#3a74cc;letter-spacing:0.434px;transform:scaleX(1.0600);-webkit-text-stroke:0.6px;">modified</span>
<div class="b badge" style="left:1557px;top:464px;width:32px;height:32px;background:#3264c2;border-radius:4px"></div>
<span class="t m" style="left:1565.76px;top:471px;font-size:22px;color:#ffffff;transform:scaleX(1.0700);font-weight:700;">M</span>
<span class="t" style="left:1605.09px;top:470px;font-size:22px;color:#ababab;letter-spacing:0.005px;transform:scaleX(1.0600);-webkit-text-stroke:0.6px;">app/src/extension/UserFormCRMExtension.php</span>
<div class="b sep" style="left:1339px;top:508px;width:1803px;height:2px;background:#333333;"></div>
<span class="t m" style="left:1416.29px;top:537px;font-size:22px;color:#b4b4b4;letter-spacing:0.033px;-webkit-text-stroke:0.64px;">1 chunk, 3 insertions, 1 deletion</span>
<div class="b sep" style="left:1339px;top:584px;width:1803px;height:2px;background:#333333;"></div>
<span class="t m" style="left:1417.10px;top:606px;font-size:20px;color:#b4b4b4;letter-spacing:-0.008px;-webkit-text-stroke:0.6px;">@@ -25,15 +25,17 @@ class UserFormCRMExtension extends DataExtension {</span>
<div class="b code" style="left:1339px;top:647px;width:1803px;height:718.4px;background:#282a2a;"></div>
<div class="b sep" style="left:1339px;top:645.5px;width:1803px;height:2px;background:#313333;"></div>
<div class="b" style="left:1469px;top:647px;width:2px;height:718.4px;background:#3a3d3d;"></div>
<div class="b" style="left:1563.2px;top:647px;width:2px;height:718.4px;background:#3a3d3d;"></div>
<span class="t m" style="left:1426.22px;top:659px;font-size:22px;color:#8a8c8c;letter-spacing:0.015px;-webkit-text-stroke:0.64px;">25</span>
<span class="t m" style="left:1520.82px;top:659px;font-size:22px;color:#8a8c8c;letter-spacing:0.015px;-webkit-text-stroke:0.64px;">25</span>
<code class="ln" style="left:1572.3px;top:659px"><span class="d">····</span>];<span class="d">¬</span></code>
<span class="t m" style="left:1425.84px;top:697px;font-size:22px;color:#8a8c8c;letter-spacing:0.015px;-webkit-text-stroke:0.64px;">26</span>
<span class="t m" style="left:1520.44px;top:697px;font-size:22px;color:#8a8c8c;letter-spacing:0.015px;-webkit-text-stroke:0.64px;">26</span>
<code class="ln" style="left:1572.3px;top:697px"><span class="d e">¬</span></code>
<span class="t m" style="left:1426.09px;top:735px;font-size:22px;color:#8a8c8c;letter-spacing:0.015px;-webkit-text-stroke:0.64px;">27</span>
<span class="t m" style="left:1520.69px;top:735px;font-size:22px;color:#8a8c8c;letter-spacing:0.015px;-webkit-text-stroke:0.64px;">27</span>
<code class="ln" style="left:1572.3px;top:735px"><span class="d">····</span><span class="k">private</span><span class="d">·</span><span class="k">static</span><span class="d">·</span><span class="v">$summary_fields</span><span class="d">·</span>=<span class="d">·</span>[<span class="d">¬</span></code>
<span class="t m" style="left:1425.84px;top:773px;font-size:22px;color:#8a8c8c;letter-spacing:0.015px;-webkit-text-stroke:0.64px;">28</span>
<span class="t m" style="left:1520.44px;top:773px;font-size:22px;color:#8a8c8c;letter-spacing:0.015px;-webkit-text-stroke:0.64px;">28</span>
<code class="ln" style="left:1572.3px;top:773px"><span class="d">········</span><span class="s">'EventName'</span><span class="d">·············</span>=&gt;<span class="d">·</span><span class="s">'EventName'</span>,<span class="d">¬</span></code>
<span class="t m" style="left:1425.84px;top:811px;font-size:22px;color:#8a8c8c;letter-spacing:0.015px;-webkit-text-stroke:0.64px;">29</span>
<span class="t m" style="left:1520.44px;top:811px;font-size:22px;color:#8a8c8c;letter-spacing:0.015px;-webkit-text-stroke:0.64px;">29</span>
<code class="ln" style="left:1572.3px;top:811px"><span class="d">········</span><span class="s">'ExperiencePageTitle'</span><span class="d">···</span>=&gt;<span class="d">·</span><span class="s">'ExperiencePageTitle'</span>,<span class="d">¬</span></code>
<span class="t m" style="left:1425.84px;top:849px;font-size:22px;color:#8a8c8c;letter-spacing:0.015px;-webkit-text-stroke:0.64px;">30</span>
<span class="t m" style="left:1520.44px;top:849px;font-size:22px;color:#8a8c8c;letter-spacing:0.015px;-webkit-text-stroke:0.64px;">30</span>
<code class="ln" style="left:1572.3px;top:849px"><span class="d">········</span><span class="s">'EventLocation'</span><span class="d">·········</span>=&gt;<span class="d">·</span><span class="s">'Location'</span>,<span class="d">¬</span></code>
<span class="t m" style="left:1425.84px;top:887px;font-size:22px;color:#8a8c8c;letter-spacing:0.015px;-webkit-text-stroke:0.64px;">31</span>
<span class="t m" style="left:1520.44px;top:887px;font-size:22px;color:#8a8c8c;letter-spacing:0.015px;-webkit-text-stroke:0.64px;">31</span>
<code class="ln" style="left:1572.3px;top:887px"><span class="d">········</span><span class="s">'CustomerName'</span><span class="d">··········</span>=&gt;<span class="d">·</span><span class="s">'CustomerName'</span>,<span class="d">¬</span></code>
<div class="b del" style="left:1565px;top:914px;width:1577px;height:38px;background:#3c2d2d;border-top:2px solid #803e37"></div>
<span class="t m" style="left:1412.96px;top:925px;font-size:22px;color:#8a8c8c;letter-spacing:0.015px;-webkit-text-stroke:0.64px;">-32</span>
<code class="ln" style="left:1572.3px;top:925px"><span class="d">········</span><span class="s">'CustomerEmail'</span><span class="d">·········</span>=&gt;<span class="d">·</span><span class="s">'CustomerEmail'</span><span class="d">¬</span></code>
<div class="b add" style="left:1565px;top:952px;width:1577px;height:38px;background:#2e382e;"></div>
<span class="t m" style="left:1507.56px;top:963px;font-size:22px;color:#8a8c8c;letter-spacing:0.015px;-webkit-text-stroke:0.64px;">+32</span>
<code class="ln" style="left:1572.3px;top:963px"><span class="d">········</span><span class="s">'CustomerEmail'</span><span class="d">·········</span>=&gt;<span class="d">·</span><span class="s">'CustomerEmail'</span>,<span class="d">¬</span></code>
<div class="b add" style="left:1565px;top:990px;width:1577px;height:38px;background:#2e382e;"></div>
<span class="t m" style="left:1507.43px;top:1001px;font-size:22px;color:#8a8c8c;letter-spacing:0.015px;-webkit-text-stroke:0.64px;">+33</span>
<code class="ln" style="left:1572.3px;top:1001px"><span class="d">········</span><span class="s">'First_Name'</span><span class="d">············</span>=&gt;<span class="d">·</span><span class="s">'First_Name'</span>,<span class="d">¬</span></code>
<div class="b add" style="left:1565px;top:1028px;width:1577px;height:38px;background:#2e382e;"></div>
<span class="t m" style="left:1506.81px;top:1039px;font-size:22px;color:#8a8c8c;letter-spacing:0.015px;-webkit-text-stroke:0.64px;">+34</span>
<code class="ln" style="left:1572.3px;top:1039px"><span class="d">········</span><span class="s">'Last_Name'</span><span class="d">············</span>=&gt;<span class="d">·</span><span class="s">'Last_Name'</span><span class="d">¬</span></code>
<span class="t m" style="left:1426.09px;top:1077px;font-size:22px;color:#8a8c8c;letter-spacing:0.015px;-webkit-text-stroke:0.64px;">33</span>
<span class="t m" style="left:1520.82px;top:1077px;font-size:22px;color:#8a8c8c;letter-spacing:0.015px;-webkit-text-stroke:0.64px;">35</span>
<code class="ln" style="left:1572.3px;top:1077px"><span class="d">····</span>];<span class="d">¬</span></code>
<span class="t m" style="left:1425.47px;top:1115px;font-size:22px;color:#8a8c8c;letter-spacing:0.015px;-webkit-text-stroke:0.64px;">34</span>
<span class="t m" style="left:1520.44px;top:1115px;font-size:22px;color:#8a8c8c;letter-spacing:0.015px;-webkit-text-stroke:0.64px;">36</span>
<code class="ln" style="left:1572.3px;top:1115px"><span class="d e">¬</span></code>
<span class="t m" style="left:1426.22px;top:1153px;font-size:22px;color:#8a8c8c;letter-spacing:0.015px;-webkit-text-stroke:0.64px;">35</span>
<span class="t m" style="left:1520.69px;top:1153px;font-size:22px;color:#8a8c8c;letter-spacing:0.015px;-webkit-text-stroke:0.64px;">37</span>
<code class="ln" style="left:1572.3px;top:1153px"><span class="d">····</span><span class="k">public</span><span class="d">·</span><span class="k">function</span><span class="d">·</span><span class="v">getCustomerName</span>()<span class="d">·</span>{<span class="d">¬</span></code>
<span class="t m" style="left:1425.84px;top:1191px;font-size:22px;color:#8a8c8c;letter-spacing:0.015px;-webkit-text-stroke:0.64px;">36</span>
<span class="t m" style="left:1520.44px;top:1191px;font-size:22px;color:#8a8c8c;letter-spacing:0.015px;-webkit-text-stroke:0.64px;">38</span>
<code class="ln" style="left:1572.3px;top:1191px"><span class="d">········</span><span class="v">$Customer</span><span class="d">·</span>=<span class="d">·</span><span class="v">CustomerSignup</span>::<span class="f">get</span>()-&gt;<span class="f">byID</span>(<span class="v">$this</span>-&gt;owner-&gt;CustomerID);<span class="d">¬</span></code>
<span class="t m" style="left:1426.09px;top:1229px;font-size:22px;color:#8a8c8c;letter-spacing:0.015px;-webkit-text-stroke:0.64px;">37</span>
<span class="t m" style="left:1520.44px;top:1229px;font-size:22px;color:#8a8c8c;letter-spacing:0.015px;-webkit-text-stroke:0.64px;">39</span>
<code class="ln" style="left:1572.3px;top:1229px"><span class="d">········</span><span class="k">if</span><span class="d">·</span>(<span class="v">$Customer</span>)<span class="d">¬</span></code>
<span class="t m" style="left:1425.84px;top:1267px;font-size:22px;color:#8a8c8c;letter-spacing:0.015px;-webkit-text-stroke:0.64px;">38</span>
<span class="t m" style="left:1520.44px;top:1267px;font-size:22px;color:#8a8c8c;letter-spacing:0.015px;-webkit-text-stroke:0.64px;">40</span>
<code class="ln" style="left:1572.3px;top:1267px"><span class="d">············</span><span class="k">return</span><span class="d">·</span><span class="v">$Customer</span>-&gt;FirstName<span class="d">·</span>.<span class="d">·</span><span class="s">"</span><span class="d">·</span><span class="s">"</span><span class="d">·</span>.<span class="d">·</span><span class="v">$Customer</span>-&gt;LastName;<span class="d">¬</span></code>
<span class="t m" style="left:1425.84px;top:1305px;font-size:22px;color:#8a8c8c;letter-spacing:0.015px;-webkit-text-stroke:0.64px;">39</span>
<span class="t m" style="left:1520.44px;top:1305px;font-size:22px;color:#8a8c8c;letter-spacing:0.015px;-webkit-text-stroke:0.64px;">41</span>
<code class="ln" style="left:1572.3px;top:1305px"><span class="d e">¬</span></code>
<div class="b" style="left:1565px;top:952px;width:1577px;height:2px;background:#467c43;"></div>
<div class="b" style="left:1565px;top:1064px;width:1577px;height:2px;background:#467c43;"></div>
</section>

</body>
</html>
